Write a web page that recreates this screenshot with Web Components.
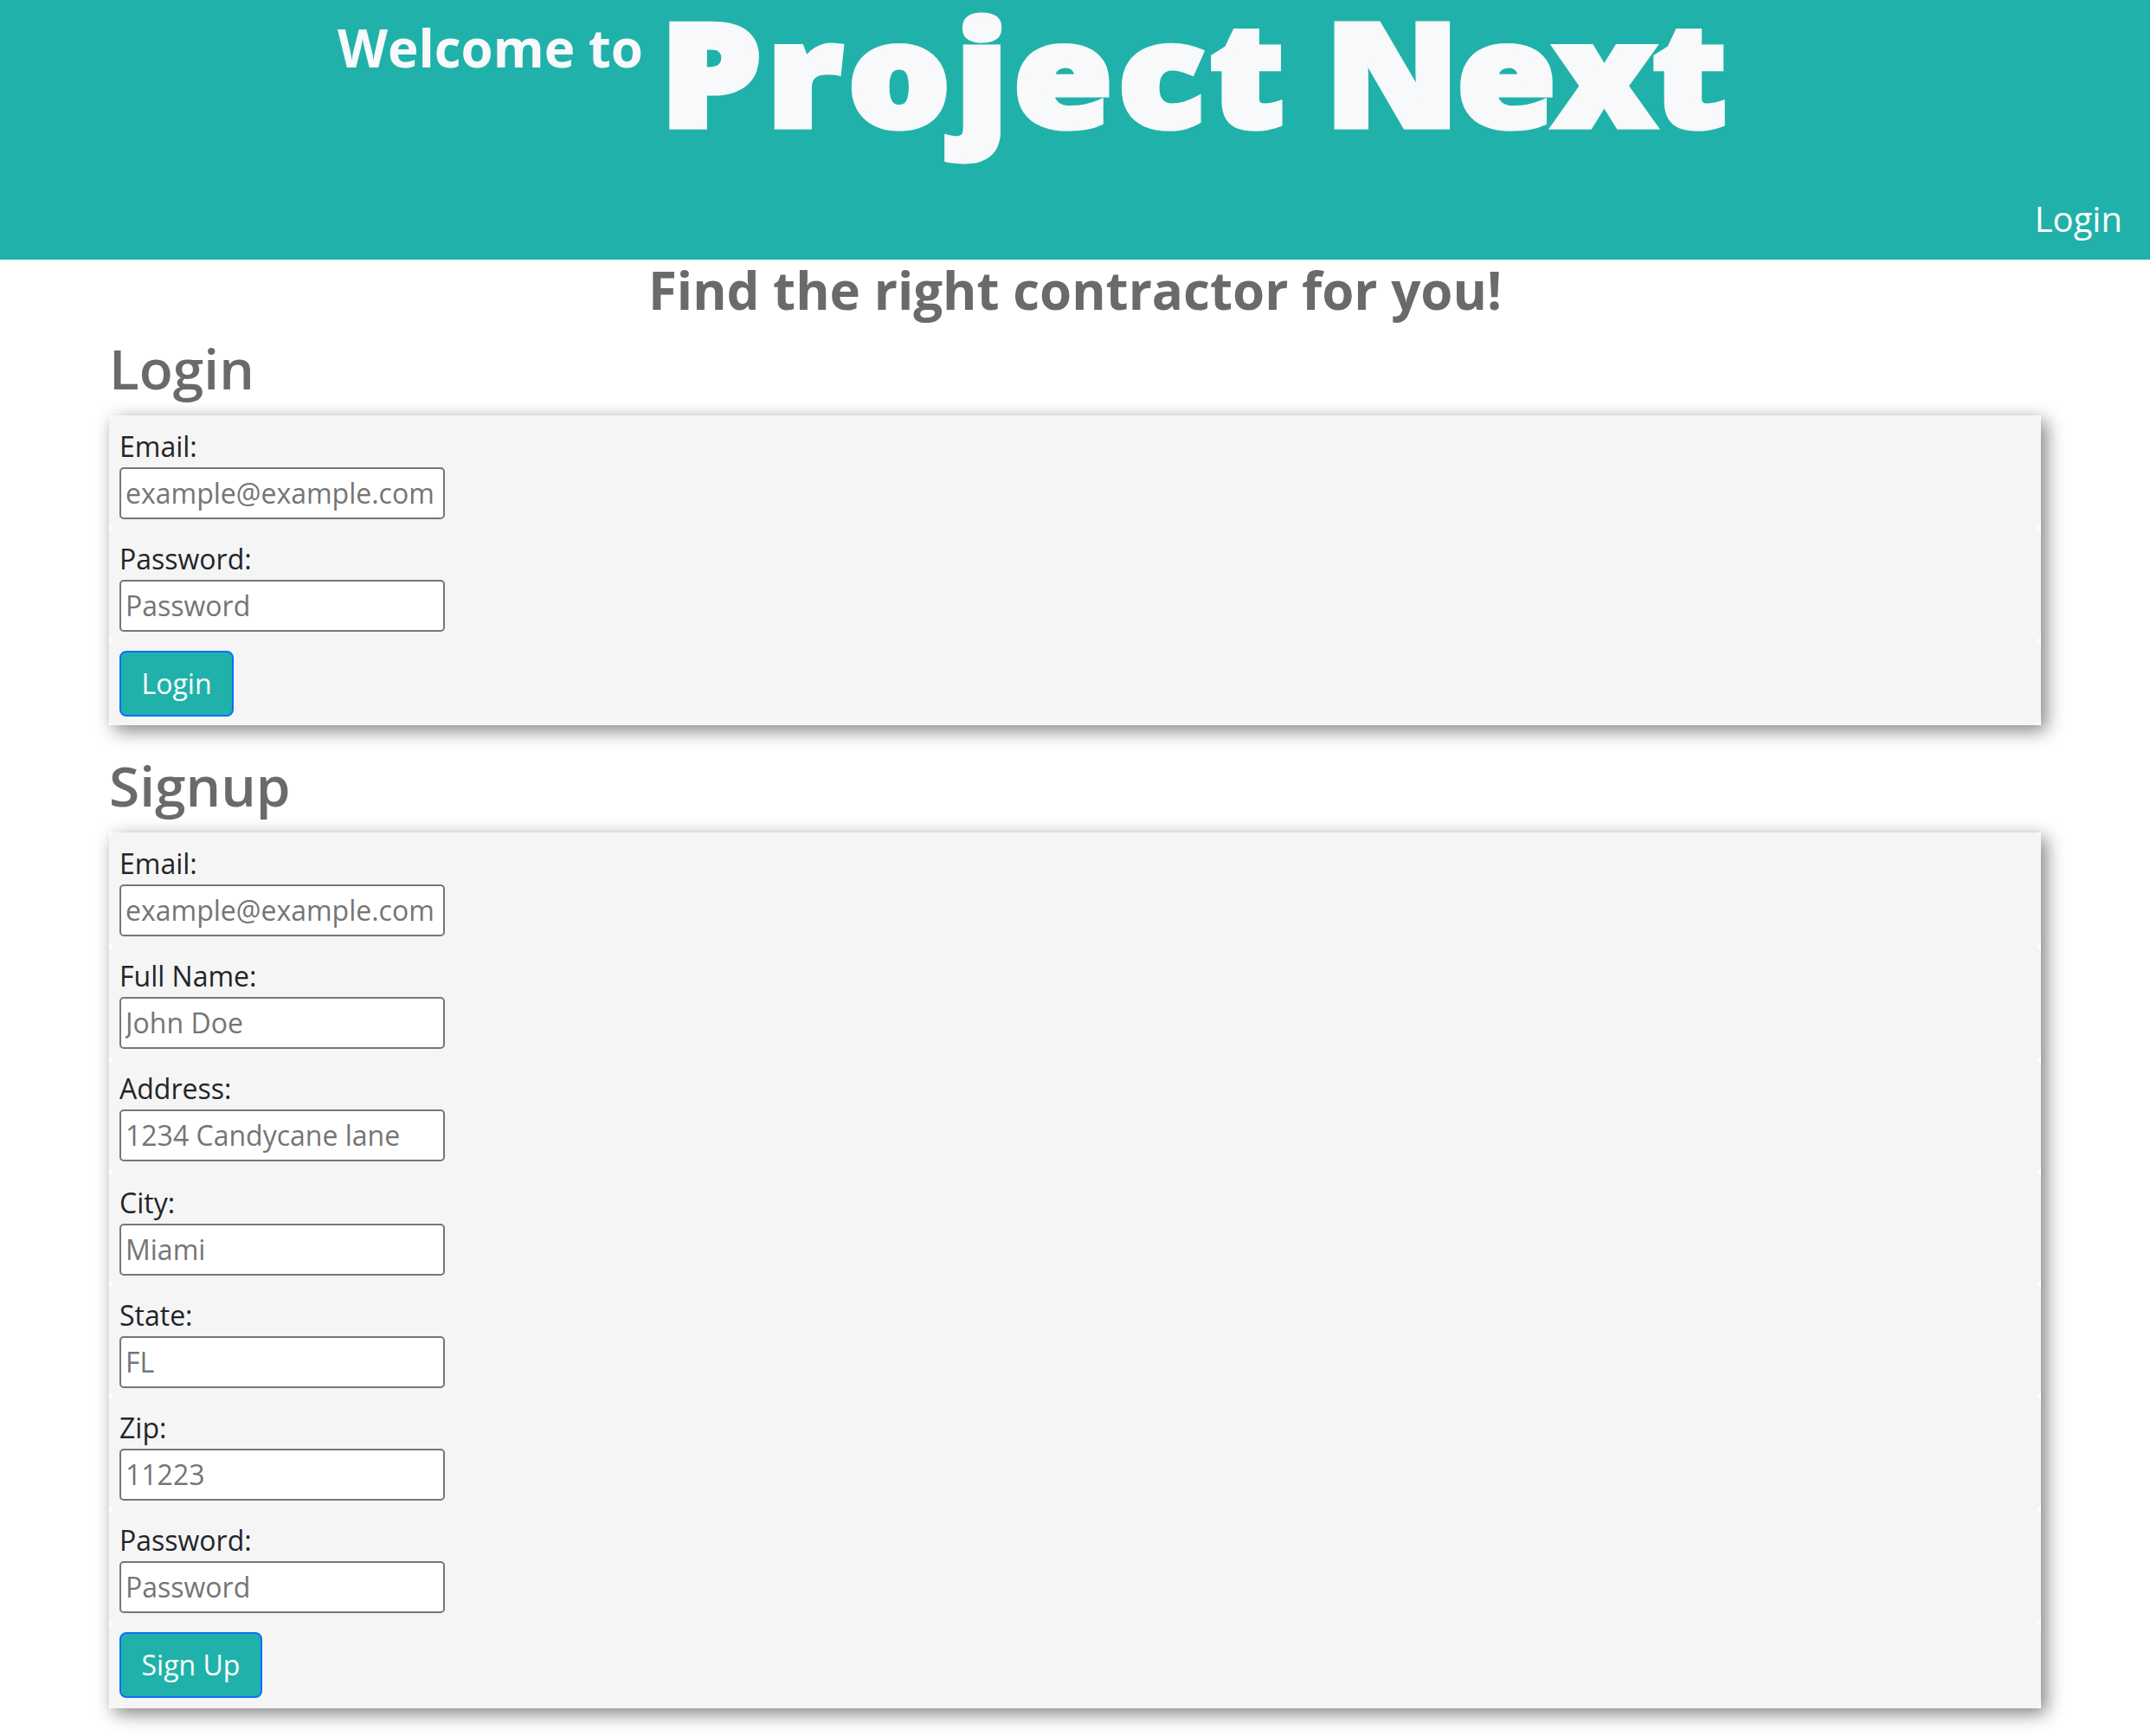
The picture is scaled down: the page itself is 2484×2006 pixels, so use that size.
<!DOCTYPE html>
<html lang="en">
<head>
<meta charset="utf-8">
<title>Project Next</title>
<style>
body{margin:0;background:#fff;color:#212529;font:400 32px/48px "Open Sans",sans-serif}
</style>
</head>
<body>
<project-page></project-page>
<script>
const define=(name,html,setup)=>customElements.define(name,class extends HTMLElement{
  constructor(){
    super();
    const t=document.createElement('template');
    t.innerHTML=html;
    this.attachShadow({mode:'open'}).append(t.content.cloneNode(true));
  }
  connectedCallback(){ if(setup) setup(this,this.shadowRoot); }
});

define('site-header',`<style>
:host{display:flex;flex-direction:column;justify-content:space-between;box-sizing:border-box;height:300px;padding-bottom:17px;background:#20b2aa;color:#f8f9fa}
h1{display:flex;align-items:flex-start;margin:0;padding-left:390px;font-size:60px;line-height:110px;font-weight:700;white-space:pre}
.brand{margin-left:20px;font-size:165px;font-weight:800;line-height:165px;-webkit-text-stroke:7px #f8f9fa;transform:scaleX(1.12);transform-origin:left}
.wide{letter-spacing:6px;word-spacing:-12px}
.snug{letter-spacing:-2px}
nav{display:flex;justify-content:flex-end;padding-right:32px}
a{color:#fff;font-size:40px;line-height:60px;text-decoration:none}
</style>
<h1><span>Welcome to</span><span class="brand"><span class="wide">Project </span><span class="snug">Next</span></span></h1>
<nav><a href="#login">Login</a></nav>`);

define('form-field',`<style>
:host{display:block;box-sizing:border-box;height:130px;padding:12px;background:#f5f5f5;border-radius:7px}
:host([tall]){height:132px}
:host([tight]){padding-top:10px}
label{display:block;height:48px}
input{display:block;box-sizing:border-box;width:376px;height:60px;margin:0;padding:1px 5px 3px;border:2px solid #767676;border-radius:5px;background:#fff;font:inherit}
input::placeholder{color:#757575;opacity:1}
</style><label></label><input>`,(host,root)=>{
  root.querySelector('label').textContent=host.getAttribute('label');
  root.querySelector('input').placeholder=host.getAttribute('hint');
});

define('form-action',`<style>
:host{display:flex;box-sizing:border-box;padding:12px 12px 10px;background:#f5f5f5;border-radius:7px}
:host([low]){padding:10px 12px 12px}
button{box-sizing:border-box;height:76px;margin:0;padding:12px 23.5px;border:2px solid #0d6efd;border-radius:8px;background:#20b2aa;color:#fff;font:inherit}
</style><button type="button"><slot></slot></button>`);

define('form-panel',`<style>
:host{display:block}
h2{margin:0 0 16px;color:#6c6a69;font-size:64px;line-height:77px;font-weight:600}
form{margin:0;background:#fff;box-shadow:6px 6px 20px #808080}
</style><h2></h2><form><slot></slot></form>`,(host,root)=>{
  root.querySelector('h2').textContent=host.getAttribute('heading');
});

define('project-page',`<style>
:host{display:block}
.tagline{margin:0;color:#6c6a69;font-size:60px;line-height:70px;font-weight:700;text-align:center}
main{display:flex;flex-direction:column;gap:31px;padding:17px 126px 32px}
</style>
<site-header></site-header>
<h3 class="tagline">Find the right contractor for you!</h3>
<main>
<form-panel heading="Login">
<form-field label="Email:" hint="example@example.com"></form-field>
<form-field label="Password:" hint="Password"></form-field>
<form-action>Login</form-action>
</form-panel>
<form-panel heading="Signup">
<form-field tall label="Email:" hint="example@example.com"></form-field>
<form-field tight label="Full Name:" hint="John Doe"></form-field>
<form-field tight label="Address:" hint="1234 Candycane lane"></form-field>
<form-field label="City:" hint="Miami"></form-field>
<form-field label="State:" hint="FL"></form-field>
<form-field label="Zip:" hint="11223"></form-field>
<form-field tall label="Password:" hint="Password"></form-field>
<form-action low>Sign Up</form-action>
</form-panel>
</main>`);
</script>
</body>
</html>
